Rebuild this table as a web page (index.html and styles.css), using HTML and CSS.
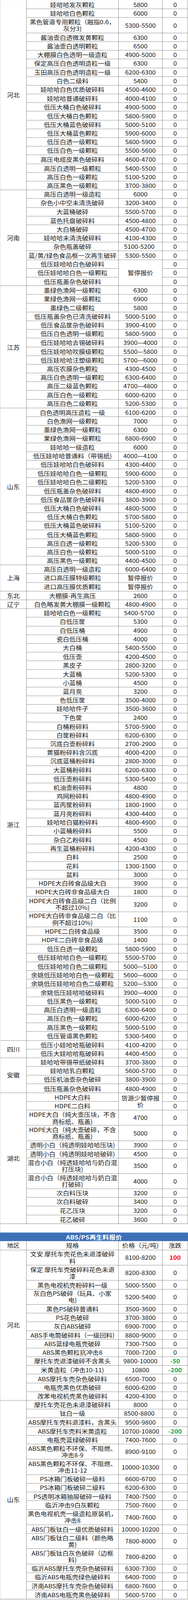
FILE: index.html
```html
<!DOCTYPE html>
<html lang="zh-CN">
<head>
<meta charset="utf-8">
<title>再生料报价</title>
<link rel="stylesheet" href="styles.css">
</head>
<body>
<main class="page">
<div class="sheet pe">
<div class="reg n21">河北</div>
<div class="r"><div>娃哈哈发灰颗粒</div><div>5800</div><div>0</div></div>
<div class="r"><div>娃哈哈白色颗粒</div><div>6000</div><div>0</div></div>
<div class="r d"><div><span>黑色管道专用颗粒（融指0.6，<br>灰分3)</span></div><div>5300-5500</div><div>0</div></div>
<div class="r"><div>酱油壶白透微发黄颗粒</div><div>6300</div><div>0</div></div>
<div class="r"><div>酱油壶白透明颗粒</div><div>6500</div><div>0</div></div>
<div class="r"><div>大棚膜白色透明一级造粒</div><div>4900-5000</div><div>0</div></div>
<div class="r"><div>保定高压白色透明造粒一级</div><div>6300</div><div>0</div></div>
<div class="r"><div>玉田高压白色透明造粒一级</div><div>6200-6300</div><div>0</div></div>
<div class="r"><div>白色二级料</div><div>5400</div><div>0</div></div>
<div class="r"><div>娃哈哈白色优质破碎料</div><div>4500-4600</div><div>0</div></div>
<div class="r"><div>娃哈哈普通破碎料</div><div>4000-4100</div><div>0</div></div>
<div class="r"><div>低压大桶白色破碎料</div><div>4900-5000</div><div>0</div></div>
<div class="r"><div>低压大桶白色颗粒</div><div>5800-5900</div><div>0</div></div>
<div class="r"><div>低压大桶蓝色破碎料</div><div>5000-5100</div><div>0</div></div>
<div class="r"><div>低压大桶蓝色颗粒</div><div>5900-6000</div><div>0</div></div>
<div class="r"><div>低压白透一级颗粒</div><div>5800-5900</div><div>0</div></div>
<div class="r"><div>低压白色一级颗粒</div><div>5500-5600</div><div>0</div></div>
<div class="r"><div>高压电缆皮黑色破碎料</div><div>4600-4700</div><div>0</div></div>
<div class="r"><div>高压白透明一级颗粒</div><div>5400-5500</div><div>0</div></div>
<div class="r"><div>高压白色一级颗粒</div><div>5100-5200</div><div>0</div></div>
<div class="r"><div>高压黑色一级颗粒</div><div>3700-3800</div><div>0</div></div>

<div class="reg n11">河南</div>
<div class="r"><div>高压白透明一级造粒</div><div>6000</div><div>0</div></div>
<div class="r"><div>杂色小中空未清洗破碎</div><div>3200-3400</div><div>0</div></div>
<div class="r"><div>大蓝桶破碎</div><div>5500-5700</div><div>0</div></div>
<div class="r"><div>蓝色托盘破碎料</div><div>4500-4800</div><div>0</div></div>
<div class="r"><div>大白桶破碎</div><div>4500-4700</div><div>0</div></div>
<div class="r"><div>娃哈哈未清洗破碎料</div><div>4100-4300</div><div>0</div></div>
<div class="r"><div>杂色瓶盖破碎</div><div class="lft">5100-5200</div><div>0</div></div>
<div class="r"><div>蓝/黄/绿色食品框一次再生破碎</div><div>5300-5500</div><div>0</div></div>
<div class="r"><div>低压娃哈哈白色破碎料</div><div class="span3">暂停报价</div><div>0</div></div>
<div class="r"><div>低压娃哈哈白色一级颗粒</div><div>0</div></div>
<div class="r"><div>低压瓶盖杂色破碎料</div><div>0</div></div>

<div class="reg n14">江苏</div>
<div class="r"><div>墨绿色渔网一级颗粒</div><div>6300</div><div>0</div></div>
<div class="r"><div>果绿色渔网一级颗粒</div><div>6900</div><div>0</div></div>
<div class="r"><div>墨绿色二级颗粒</div><div>5800</div><div>0</div></div>
<div class="r"><div>低压瓶盖杂色已清洗破碎料</div><div>5000-5100</div><div>0</div></div>
<div class="r"><div>低压食品筐杂色破碎料</div><div>3900-4100</div><div>0</div></div>
<div class="r"><div>低压白色透明一级颗粒</div><div>5800-5900</div><div>0</div></div>
<div class="r"><div>低压娃哈哈去锡破碎料</div><div>3900—4000</div><div>0</div></div>
<div class="r"><div>低压娃哈哈吹膜级颗粒</div><div>5500—5800</div><div>0</div></div>
<div class="r"><div>低压娃哈哈注塑级颗粒</div><div>5700—6000</div><div>0</div></div>
<div class="r"><div>高压农膜杂色颗粒</div><div>4300-4500</div><div>0</div></div>
<div class="r"><div>高压白色透明一级颗粒</div><div>6300-6400</div><div>0</div></div>
<div class="r"><div>高压二级蓝色颗粒</div><div>4700—4800</div><div>0</div></div>
<div class="r"><div>高压白色一级颗粒</div><div>6000-6200</div><div>0</div></div>
<div class="r"><div>高压白色二级颗粒</div><div>5200-5300</div><div>0</div></div>

<div class="reg n18">山东</div>
<div class="r"><div>白色透明高压造粒 一级</div><div>6100-6200</div><div>0</div></div>
<div class="r"><div>白色渔网一级颗粒</div><div>7000</div><div>0</div></div>
<div class="r"><div>墨绿色渔网一级颗粒</div><div>6300</div><div>0</div></div>
<div class="r"><div>果绿色渔网一级颗粒</div><div>6800-6900</div><div>0</div></div>
<div class="r"><div>娃哈哈一级造粒</div><div>6000</div><div>0</div></div>
<div class="r"><div>低压娃哈哈普通料（带锡纸)</div><div>4000—4100</div><div>0</div></div>
<div class="r"><div>低压娃哈哈白色破碎料</div><div>4300-4400</div><div>0</div></div>
<div class="r"><div>低压娃哈哈白色一级颗粒</div><div>5900-6000</div><div>0</div></div>
<div class="r"><div>低压娃哈哈白色二级颗粒</div><div>5200-5300</div><div>0</div></div>
<div class="r"><div>低压瓶盖杂色破碎料</div><div>4800-4900</div><div>0</div></div>
<div class="r"><div>低压食品筐杂色破碎料</div><div>3800-3900</div><div>0</div></div>
<div class="r"><div>低压大桶白色破碎料</div><div>4800-5000</div><div>0</div></div>
<div class="r"><div>低压大桶白色颗粒</div><div>5700-5800</div><div>0</div></div>
<div class="r"><div>低压大桶蓝色破碎料</div><div>5100-5200</div><div>0</div></div>
<div class="r"><div>低压大桶蓝色颗粒</div><div>5800-5900</div><div>0</div></div>
<div class="r"><div>高压白透一级颗粒</div><div>5200-5300</div><div>0</div></div>
<div class="r"><div>高压白色一级颗粒</div><div>5000-5100</div><div>0</div></div>
<div class="r"><div>高压黑色一级颗粒</div><div>4400-4500</div><div>0</div></div>

<div class="reg n3">上海</div>
<div class="r"><div>高压白透明一级造粒</div><div>6000-6400</div><div>0</div></div>
<div class="r"><div>进口高压膜特级颗粒</div><div>暂停报价</div><div>0</div></div>
<div class="r"><div>进口高压膜优质颗粒</div><div>暂停报价</div><div>0</div></div>
<div class="reg">东北</div>
<div class="r"><div>大棚膜-再生高压</div><div>2600</div><div>0</div></div>
<div class="reg">辽宁</div>
<div class="r"><div>白色略发黄大棚膜一级颗粒</div><div>4800-4900</div><div>0</div></div>

<div class="reg n48">浙江</div>
<div class="r"><div>娃哈哈白色一级颗粒</div><div class="lft">5400-5700</div><div>0</div></div>
<div class="r"><div>白低压筐</div><div>5300</div><div>0</div></div>
<div class="r"><div>白低压桶</div><div>4900</div><div>0</div></div>
<div class="r"><div>瓷白低压桶</div><div>4000</div><div>0</div></div>
<div class="r"><div>大白桶</div><div>5400-5500</div><div>0</div></div>
<div class="r"><div>低压壶</div><div>4200-4500</div><div>0</div></div>
<div class="r"><div>黑皮子</div><div>2800-3200</div><div>0</div></div>
<div class="r"><div>大蓝桶</div><div>5200-5300</div><div>0</div></div>
<div class="r"><div>小蓝桶</div><div>4500</div><div>0</div></div>
<div class="r"><div>蓝月亮</div><div>3200</div><div>0</div></div>
<div class="r"><div>色低压筐</div><div>3500-4000</div><div>0</div></div>
<div class="r"><div>娃哈哈件子</div><div>3500-3600</div><div>0</div></div>
<div class="r"><div>下色筐</div><div>2400</div><div>0</div></div>
<div class="r"><div>白桶粉碎料</div><div>5700-5900</div><div>0</div></div>
<div class="r"><div>白筐粉碎料</div><div>6200-6300</div><div>0</div></div>
<div class="r"><div>沉底白壶粉碎料</div><div>2700-2900</div><div>0</div></div>
<div class="r"><div>黄猫粉碎料含沉底</div><div>4000-4200</div><div>0</div></div>
<div class="r"><div>沉底蓝桶粉碎料</div><div>2800-3000</div><div>0</div></div>
<div class="r"><div>大蓝桶粉碎料</div><div>6200-6300</div><div>0</div></div>
<div class="r"><div>低压壶粉碎料</div><div>5300-5400</div><div>0</div></div>
<div class="r"><div>机油壶粉碎料</div><div>4800</div><div>0</div></div>
<div class="r"><div>鸡网粉碎料</div><div>4800-4900</div><div>0</div></div>
<div class="r"><div>蓝丙筐粉碎料</div><div>1800-1900</div><div>0</div></div>
<div class="r"><div>蓝月亮粉碎料</div><div>4300-4400</div><div>0</div></div>
<div class="r"><div>娃哈哈白猫粉碎料</div><div>4800-4900</div><div>0</div></div>
<div class="r"><div>小蓝桶粉碎料</div><div>5500</div><div>0</div></div>
<div class="r"><div>杂白乙粉碎料</div><div>4500</div><div>0</div></div>
<div class="r"><div>再生蓝桶粉碎料</div><div>4200-4300</div><div>0</div></div>
<div class="r"><div>白料</div><div>2500</div><div>0</div></div>
<div class="r"><div>花料</div><div>1300-1500</div><div>0</div></div>
<div class="r"><div>盆料</div><div>3000</div><div>0</div></div>
<div class="r"><div>HDPE大白砖食品级大白</div><div>3900</div><div>0</div></div>
<div class="r"><div>HDPE大白砖非食品级大白</div><div>1800</div><div>0</div></div>
<div class="r d"><div><span>HDPE大白砖食品级二白（比例<br>不超过10%)</span></div><div>3200</div><div>0</div></div>
<div class="r d"><div><span>HDPE大白砖非食品级二白（比<br>例不超过10%)</span></div><div>1100</div><div>0</div></div>
<div class="r"><div>HDPE二白砖食品级</div><div>3500</div><div>0</div></div>
<div class="r"><div>HDPE二白砖非食品级</div><div>1400</div><div>0</div></div>
<div class="r"><div>低压白透一级颗粒</div><div>5800-5900</div><div>0</div></div>
<div class="r"><div>低压娃哈哈白色一级颗粒</div><div>5500-5700</div><div>0</div></div>
<div class="r"><div>低压娃哈哈白色二级颗粒</div><div>5000—5100</div><div>0</div></div>
<div class="r"><div>余姚低压娃哈哈白色一级颗粒</div><div>5600—6000</div><div>0</div></div>
<div class="r"><div>余姚低压娃哈哈白色二级颗粒</div><div>5200—5300</div><div>0</div></div>
<div class="r"><div>余姚低压娃哈哈破碎料</div><div>3900—4000</div><div>0</div></div>
<div class="r"><div>低压黑色一级颗粒</div><div>5000-5100</div><div>0</div></div>
<div class="r"><div>高压白透明一级造粒</div><div>6300-6400</div><div>0</div></div>
<div class="r"><div>高压白色一级颗粒</div><div>6000-6200</div><div>0</div></div>
<div class="r"><div>高压黑色一级颗粒</div><div>5000-5100</div><div>0</div></div>
<div class="r"><div>低压管道黑色颗粒</div><div>5300-5400</div><div>0</div></div>

<div class="reg n2">四川</div>
<div class="r"><div>低压小娃哈哈瓶破碎料</div><div>4100-4200</div><div>0</div></div>
<div class="r"><div>低压大娃哈哈瓶破碎料</div><div>4400-4500</div><div>0</div></div>

<div class="reg n4">安徽</div>
<div class="r"><div>娃哈哈带锡带纸破碎料</div><div>3700-3800</div><div>0</div></div>
<div class="r"><div>娃哈哈乳白颗粒</div><div>5600-5700</div><div>0</div></div>
<div class="r"><div>低压机油壶杂色破碎</div><div>3800-3900</div><div>0</div></div>
<div class="r"><div>低压瓶盖杂色破碎料</div><div>4800-4900</div><div>0</div></div>

<div class="reg n12">湖北</div>
<div class="r"><div>HDPE大白料</div><div class="span2"><span>货源少暂停报<br>价</span></div><div>0</div></div>
<div class="r"><div>HDPE二白料</div><div>0</div></div>
<div class="r d"><div><span>HDPE大白（纯大壶压块，不含<br>商标纸、瓶盖)</span></div><div>4700</div><div>0</div></div>
<div class="r d"><div><span>HDPE大白（纯大壶破碎，不含<br>商标纸、瓶盖)</span></div><div>5000</div><div>0</div></div>
<div class="r"><div>透明小白（纯透明娃哈哈压块)</div><div>3900</div><div>0</div></div>
<div class="r"><div>透明小白（纯透明娃哈哈破碎)</div><div>4500</div><div>0</div></div>
<div class="r d"><div><span>混合小白（纯透娃哈哈与奶白混<br>打压块)</span></div><div>3500</div><div>0</div></div>
<div class="r d"><div><span>混合小白（纯透娃哈哈与奶白混<br>打破碎)</span></div><div>4000</div><div>0</div></div>
<div class="r"><div>次白料压块</div><div>3200</div><div>0</div></div>
<div class="r"><div>次白料破碎</div><div>3400</div><div>0</div></div>
<div class="r"><div>花乙压块</div><div>3200</div><div>0</div></div>
<div class="r"><div>花乙破碎</div><div>3600</div><div>0</div></div>
</div>

<div class="spacer"></div>
<div class="title">ABS/PS再生料报价</div>

<div class="sheet abs">
<div class="r head"><div>地区</div><div>规格</div><div>价格（元/吨)</div><div>涨跌</div></div>

<div class="reg n15">河北</div>
<div class="r d"><div><span>文安 摩托车壳花色未退漆破碎<br>料</span></div><div>8100-8200</div><div class="up">100</div></div>
<div class="r d"><div><span>保定 摩托车壳破碎料花色未退<br>漆</span></div><div>8200-8300</div><div>0</div></div>
<div class="r"><div>黑色电视机壳粉碎料一级</div><div>5000-5500</div><div>0</div></div>
<div class="r d"><div><span>灰白色PS破碎（玩具、小家<br>电)</span></div><div>5200-5400</div><div>0</div></div>
<div class="r"><div>黑色PS破碎普通料</div><div>3500-3600</div><div>0</div></div>
<div class="r"><div>PS花色破碎</div><div>3700-3800</div><div>0</div></div>
<div class="r"><div>灰白ABS破碎</div><div>6900-7000</div><div>0</div></div>
<div class="r"><div>ABS手电筒破碎料（一级回料)</div><div>8800-9000</div><div>0</div></div>
<div class="r"><div>ABS蓝绿电瓶壳破碎</div><div>7300-7500</div><div>0</div></div>
<div class="r"><div>ABS黑色颗粒抗冲击8</div><div>7000-7200</div><div>0</div></div>
<div class="r"><div>摩托车壳退漆破碎不含黑头</div><div>9800-10000</div><div class="down">-50</div></div>
<div class="r"><div>米黄造粒（冲击10-11)</div><div>10800</div><div class="down">-200</div></div>
<div class="r"><div>ABS摩托车壳杂色破碎料</div><div>6500-7000</div><div>0</div></div>
<div class="r"><div>电瓶壳黑色优质破碎</div><div>6000-6200</div><div>0</div></div>
<div class="r"><div>改苯电视机壳黑色破碎料</div><div>4200-4300</div><div>0</div></div>

<div class="reg n19">山东</div>
<div class="r"><div>摩托车壳花色未退漆破碎料</div><div>8000</div><div>0</div></div>
<div class="r"><div>钛白一级</div><div class="lft">8500-8800</div><div>0</div></div>
<div class="r"><div>ABS摩托车壳料退漆料，含黑头</div><div>9500-9800</div><div>0</div></div>
<div class="r"><div>ABS摩托车壳料米黄造粒</div><div>10700-10800</div><div class="down">-200</div></div>
<div class="r"><div>电瓶壳蓝绿破碎料</div><div>7400-7600</div><div>0</div></div>
<div class="r d"><div><span>ABS黑色颗粒不环保、不阻燃、<br>冲击8-9</span></div><div>8900-9100</div><div>0</div></div>
<div class="r d"><div><span>ABS黑色颗粒不环保、不阻燃、<br>冲击11-12</span></div><div>10000-10300</div><div>0</div></div>
<div class="r"><div>PS冰箱门板破碎一级料</div><div>6600-6700</div><div>0</div></div>
<div class="r"><div>PS冰箱门板破碎二级料</div><div>6200-6300</div><div>0</div></div>
<div class="r"><div>PS透明冰箱抽屉破碎一级料</div><div>7400-7500</div><div>0</div></div>
<div class="r"><div>临沂冲击9白灰颗粒</div><div>7500-7600</div><div>0</div></div>
<div class="r d"><div><span>黑色电视机壳一级造粒原装机，<br>冲击8</span></div><div>7400-7600</div><div>0</div></div>
<div class="r"><div>ABS门板钛白一级优质破碎料</div><div>10000-10200</div><div>0</div></div>
<div class="r d"><div><span>ABS门板钛白二级料（颜色略<br>黄)</span></div><div>7800-8000</div><div>0</div></div>
<div class="r d"><div><span>ABS门板钛白灰色破碎（边框<br>料)</span></div><div>7800-8200</div><div>0</div></div>
<div class="r"><div>临沂ABS摩托车壳杂色破碎料</div><div>6300-7300</div><div>0</div></div>
<div class="r"><div>临沂ABS电瓶壳绿色破碎料</div><div>6400-7000</div><div>0</div></div>
<div class="r"><div>济南ABS摩托车壳杂色破碎料</div><div>6800-7600</div><div>0</div></div>
<div class="r"><div>济南ABS电瓶壳黑色破碎料</div><div>5600-5700</div><div>0</div></div>
</div>
</main>
</body>
</html>
```

FILE: styles.css
```css
html, body {
  margin: 0;
  padding: 0;
  background: #ffffff;
  overflow: hidden;
}

html {
  height: 4096px;
}

body {
  width: 480px;
  height: 4096px;
  font-family: "Noto Sans CJK SC", "Microsoft YaHei", "Noto Sans", sans-serif;
  font-size: 16.3px;
  color: #161616;
}

/* the capture window is 4096px tall and is stretched to the 4437px frame,
   so the sheet is drawn at 4096/4437 of its height */
.page {
  width: 480px;
  transform: scaleY(0.923146);
  transform-origin: 0 0;
  margin-bottom: -341px;
}

.sheet {
  display: grid;
  grid-template-columns: 66px 234px 111px 64px;
  gap: 1px;
  width: 480px;
  box-sizing: border-box;
  background: #8a8a8a;
  border-left: 1px solid #d6d6d6;
  border-right: 1px solid #8a8a8a;
  border-bottom: 1px solid #8a8a8a;
}

.sheet.pe {
  border-top: 1px solid #ffffff;
}

.r {
  display: contents;
}

.reg,
.r > div {
  background: #ffffff;
  display: flex;
  align-items: center;
  justify-content: center;
  text-align: center;
  white-space: nowrap;
  line-height: 19px;
  min-width: 0;
}

.r > div {
  height: 23.2px;
}

.r.d > div {
  height: 41.4px;
}

.r.head > div {
  height: 23.3px;
}

.r > div.span2 {
  grid-row: span 2;
  height: auto;
}

.r > div.span3 {
  grid-row: span 3;
  height: auto;
}

.n2 { grid-row: span 2; }
.n3 { grid-row: span 3; }
.n4 { grid-row: span 4; }
.n11 { grid-row: span 11; }
.n12 { grid-row: span 12; }
.n14 { grid-row: span 14; }
.n15 { grid-row: span 15; }
.n18 { grid-row: span 18; }
.n19 { grid-row: span 19; }
.n21 { grid-row: span 21; }
.n48 { grid-row: span 48; }

.r > div.lft {
  padding-right: 6px;
}

.r > div.up {
  color: #ff0000;
  font-weight: 700;
}

.r > div.down {
  color: #00a84f;
  font-weight: 700;
}

.spacer {
  height: 24.6px;
  box-sizing: border-box;
  border-left: 1px solid #d6d6d6;
}

.title {
  height: 24px;
  line-height: 24px;
  background: #3d70b8;
  color: #ffffff;
  font-weight: 700;
  text-align: center;
  letter-spacing: 0.3px;
}
```
